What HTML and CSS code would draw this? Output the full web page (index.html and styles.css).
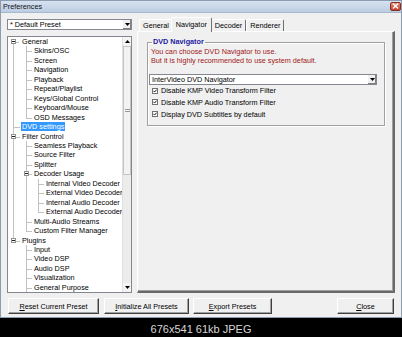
FILE: index.html
```html
<!DOCTYPE html>
<html>
<head>
<meta charset="utf-8">
<title>Preferences</title>
<link rel="stylesheet" href="styles.css">
</head>
<body>
<div class="window">
  <div class="titlebar">
    <span class="title">Preferences</span>
    <span class="close"><svg width="7" height="6" viewBox="0 0 7 6"><path d="M1 0.5 L6 5.5 M6 0.5 L1 5.5" stroke="#fff" stroke-width="1.4"/></svg></span>
  </div>
  <div class="client">
    <div class="main">
      <div class="left">
        <div class="combo preset">
          <span class="combo-text">* Default Preset</span>
          <span class="combo-btn"><svg width="5" height="3" viewBox="0 0 5 3"><path d="M0 0 H5 L2.5 3 Z" fill="#000"/></svg></span>
        </div>
        <div class="treebox">
          <ul class="tree">
            <li class="parent"><span class="exp"></span><span class="lbl">General</span>
              <ul>
                <li><span class="lbl">Skins/OSC</span></li>
                <li><span class="lbl">Screen</span></li>
                <li><span class="lbl">Navigation</span></li>
                <li><span class="lbl">Playback</span></li>
                <li><span class="lbl">Repeat/Playlist</span></li>
                <li><span class="lbl">Keys/Global Control</span></li>
                <li><span class="lbl">Keyboard/Mouse</span></li>
                <li><span class="lbl">OSD Messages</span></li>
              </ul>
            </li>
            <li><span class="lbl sel">DVD settings</span></li>
            <li class="parent"><span class="exp"></span><span class="lbl">Filter Control</span>
              <ul>
                <li><span class="lbl">Seamless Playback</span></li>
                <li><span class="lbl">Source Filter</span></li>
                <li><span class="lbl">Splitter</span></li>
                <li class="parent"><span class="exp"></span><span class="lbl">Decoder Usage</span>
                  <ul>
                    <li><span class="lbl">Internal Video Decoder</span></li>
                    <li><span class="lbl">External Video Decoder</span></li>
                    <li><span class="lbl">Internal Audio Decoder</span></li>
                    <li><span class="lbl">External Audio Decoder</span></li>
                  </ul>
                </li>
                <li><span class="lbl">Multi-Audio Streams</span></li>
                <li><span class="lbl">Custom Filter Manager</span></li>
              </ul>
            </li>
            <li class="parent"><span class="exp"></span><span class="lbl">Plugins</span>
              <ul>
                <li><span class="lbl">Input</span></li>
                <li><span class="lbl">Video DSP</span></li>
                <li><span class="lbl">Audio DSP</span></li>
                <li><span class="lbl">Visualization</span></li>
                <li class="cont"><span class="lbl">General Purpose</span></li>
              </ul>
            </li>
          </ul>
          <div class="vscroll">
            <div class="sb-btn"><svg width="5" height="3" viewBox="0 0 5 3"><path d="M0 3 H5 L2.5 0 Z" fill="#000"/></svg></div>
            <div class="sb-thumb"><span class="grip"></span></div>
            <div class="sb-track"></div>
            <div class="sb-btn"><svg width="5" height="3" viewBox="0 0 5 3"><path d="M0 0 H5 L2.5 3 Z" fill="#000"/></svg></div>
          </div>
        </div>
      </div>
      <div class="right">
        <div class="tabs">
          <div class="tab">General</div>
          <div class="tab active">Navigator</div>
          <div class="tab">Decoder</div>
          <div class="tab">Renderer</div>
        </div>
        <div class="panel">
          <fieldset class="group">
            <legend>DVD Navigator</legend>
            <p class="warn">You can choose DVD Navigator to use.<br>But it is highly recommended to use system default.</p>
            <div class="combo nav">
              <span class="combo-text">InterVideo DVD Navigator</span>
              <span class="combo-btn"><svg width="5" height="3" viewBox="0 0 5 3"><path d="M0 0 H5 L2.5 3 Z" fill="#000"/></svg></span>
            </div>
            <div class="check"><span class="box"><svg width="5" height="5" viewBox="0 0 5 5"><path d="M0.5 2.2 L2 3.8 L4.6 0.8" stroke="#000" stroke-width="1.1" fill="none"/></svg></span>Disable KMP Video Transform Filter</div>
            <div class="check"><span class="box"><svg width="5" height="5" viewBox="0 0 5 5"><path d="M0.5 2.2 L2 3.8 L4.6 0.8" stroke="#000" stroke-width="1.1" fill="none"/></svg></span>Disable KMP Audio Transform Filter</div>
            <div class="check"><span class="box"><svg width="5" height="5" viewBox="0 0 5 5"><path d="M0.5 2.2 L2 3.8 L4.6 0.8" stroke="#000" stroke-width="1.1" fill="none"/></svg></span>Display DVD Subtitles by default</div>
          </fieldset>
        </div>
      </div>
    </div>
    <div class="buttons">
      <button class="btn btn-reset"><u>R</u>eset Current Preset</button>
      <button class="btn btn-init"><u>I</u>nitialize All Presets</button>
      <button class="btn btn-export"><u>E</u>xport Presets</button>
      <span class="spacer"></span>
      <button class="btn btn-close"><u>C</u>lose</button>
    </div>
  </div>
</div>
<div class="caption">676x541 61kb JPEG</div>
</body>
</html>
```

FILE: styles.css
```css
* { box-sizing: border-box; }
html, body { margin: 0; padding: 0; }
body {
  width: 402px;
  height: 337px;
  overflow: hidden;
  background: #000;
  font-family: "Liberation Sans", Arial, sans-serif;
  font-size: 7.25px;
  color: #000;
}
.window {
  width: 402px;
  height: 318px;
  background: #f0f0f0;
  border: 1px solid #8d9cb1;
  display: flex;
  flex-direction: column;
}
.titlebar {
  height: 12px;
  flex: none;
  display: flex;
  align-items: center;
  justify-content: space-between;
  padding-left: 2px;
  background: linear-gradient(#d7e2f0, #bccde3);
  border-bottom: 1px solid #a9b8cc;
}
.title { color: #111; }
.close {
  width: 11px;
  height: 9px;
  margin-top: -1px;
  background: linear-gradient(#e88a7a, #c2412c);
  border: 1px solid #8a3020;
  border-radius: 2px;
  display: flex;
  align-items: center;
  justify-content: center;
}
.client {
  flex: 1;
  display: flex;
  flex-direction: column;
  padding: 3px 6px 3px 6px;
}
.main {
  flex: 1;
  display: flex;
  gap: 5px;
  min-height: 0;
}
.left {
  width: 125px;
  display: flex;
  flex-direction: column;
  padding-top: 3px;
}
.combo {
  height: 11px;
  display: flex;
  background: #fff;
  border: 1px solid #828790;
}
.combo-text {
  flex: 1;
  line-height: 9px;
  padding-left: 2px;
  white-space: nowrap;
}
.combo-btn {
  width: 9px;
  background: #f0f0f0;
  border-left: 1px solid #fff;
  box-shadow: inset -1px -1px 0 #808080;
  display: flex;
  align-items: center;
  justify-content: center;
}
.treebox {
  flex: 1;
  margin-top: 6px;
  background: #fff;
  border: 1px solid #828790;
  display: flex;
  min-height: 0;
  overflow: hidden;
}
.tree, .tree ul {
  list-style: none;
  margin: 0;
  padding: 0;
}
.tree {
  flex: 1;
  padding-left: 5px;
  overflow: hidden;
  line-height: 9.45px;
  white-space: nowrap;
}
.tree ul { padding-left: 5px; }
.tree li {
  position: relative;
  padding-left: 7px;
}
.tree > li { padding-left: 8px; }
.tree li::before {
  content: "";
  position: absolute;
  left: 0;
  top: 0;
  width: 5px;
  height: 5px;
  border-left: 1px solid #c2c2c2;
  border-bottom: 1px solid #c2c2c2;
}
.tree > li::before { width: 6px; }
.tree > li:first-child::before { border-left: none; }
.tree li::after {
  content: "";
  position: absolute;
  left: 0;
  top: 5px;
  bottom: 0;
  border-left: 1px solid #c2c2c2;
}
.tree li:last-child::after { display: none; }
.tree li.cont::after { display: block; }
.exp {
  position: absolute;
  left: -2px;
  top: 2px;
  width: 5px;
  height: 5px;
  background: #fff;
  border: 1px solid #8f8f8f;
  z-index: 1;
}
.exp::after {
  content: "";
  position: absolute;
  left: 0;
  top: 1px;
  width: 3px;
  height: 1px;
  background: #222;
}
.lbl { padding: 0 1px; }
.sel { background: #3399ff; color: #fff; }
.vscroll {
  width: 9px;
  flex: none;
  display: flex;
  flex-direction: column;
  background: #ececec;
  border-left: 1px solid #e0e0e0;
}
.sb-btn {
  height: 9px;
  flex: none;
  display: flex;
  align-items: center;
  justify-content: center;
  background: #f4f4f4;
}
.sb-thumb {
  height: 129px;
  flex: none;
  background: #f3f3f3;
  border: 1px solid #c4c4c4;
  display: flex;
  align-items: center;
  justify-content: center;
}
.grip {
  width: 5px;
  height: 3px;
  border-top: 1px solid #999;
  border-bottom: 1px solid #999;
}
.sb-track { flex: 1; }
.right {
  flex: 1;
  display: flex;
  flex-direction: column;
}
.tabs {
  height: 15px;
  flex: none;
  display: flex;
  align-items: flex-end;
  padding-left: 2px;
}
.tab {
  height: 12px;
  line-height: 11px;
  padding: 0 3px;
  border-top: 1px solid #fff;
  border-left: 1px solid #fff;
  border-right: 1px solid #707070;
  border-radius: 2px 2px 0 0;
  background: #f0f0f0;
  white-space: nowrap;
}
.tab.active {
  position: relative;
  z-index: 1;
  height: 15px;
  margin: 0 -1px -1px -2px;
  padding: 0 4px 0 4px;
  line-height: 13px;
}
.panel {
  flex: 1;
  background: #f0f0f0;
  border-top: 1px solid #fff;
  border-left: 1px solid #fff;
  border-right: 2px solid #6a6a6a;
  border-bottom: 2px solid #6a6a6a;
  box-shadow: inset -1px -1px 0 #a0a0a0;
  padding: 6px 8px 0 9px;
  display: flex;
  flex-direction: column;
}
.group {
  margin: 0;
  height: 88px;
  border: 1px solid #a0a0a0;
  box-shadow: inset 1px 1px 0 #fff, 1px 1px 0 #fff;
  padding: 0 6px 0 3px;
  min-width: 0;
}
.group legend {
  margin-left: 1px;
  padding: 0 1px;
  line-height: 8px;
  font-weight: bold;
  color: #1c1ca0;
}
.warn {
  margin: 1px 0 0 0;
  line-height: 9.4px;
  color: #a01818;
}
.combo.nav {
  margin: 8px 1px 0 -2px;
}
.check {
  display: flex;
  align-items: center;
  height: 11.7px;
  margin-left: 1px;
}
.check:first-of-type { margin-top: 2px; }
.box {
  width: 6px;
  height: 6px;
  margin-right: 3px;
  background: #fff;
  border: 1px solid #707070;
  display: flex;
  align-items: center;
  justify-content: center;
}
.box svg { width: 4px; height: 4px; }
.buttons {
  height: 16px;
  flex: none;
  margin-top: 5px;
  display: flex;
  gap: 5px;
  padding-left: 1px;
  padding-right: 1px;
}
.btn {
  height: 16px;
  margin: 0;
  padding: 0;
  font-family: inherit;
  font-size: 7.25px;
  color: #000;
  background: #f0f0f0;
  border: 1px solid;
  border-color: #fff #404040 #404040 #fff;
  box-shadow: inset -1px -1px 0 #a0a0a0;
  white-space: nowrap;
}
.btn-reset { width: 91px; }
.btn-init { width: 85px; }
.btn-export { width: 79px; margin-left: -1px; }
.btn-close { width: 57px; }
.spacer { flex: 1; }
.caption {
  height: 19px;
  padding-top: 3px;
  line-height: 16px;
  text-align: center;
  color: #d8d8d8;
  font-size: 11px;
}
```
